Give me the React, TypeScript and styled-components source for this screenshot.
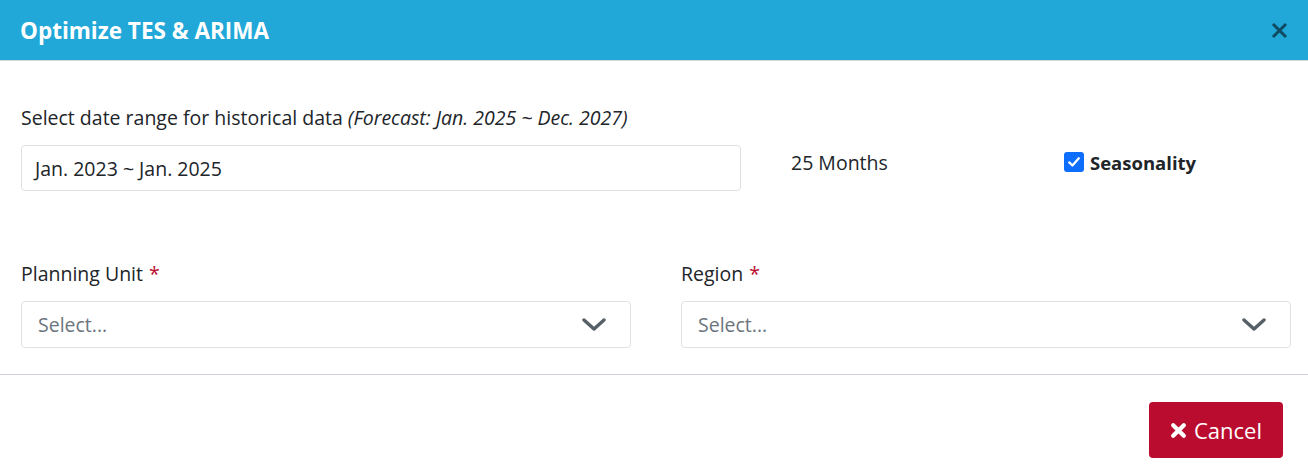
import styled, { createGlobalStyle } from "styled-components"

const GlobalStyle = createGlobalStyle`
    html, body {
        margin: 0;
        padding: 0;
        background: #fff;
    }
    body {
        font-family: 'Open Sans', 'Noto Sans', sans-serif;
        color: #212529;
    }
    * {
        box-sizing: border-box;
    }
`

const Modal = styled.div`
    width: 1308px;
    height: 469px;
    display: flex;
    flex-direction: column;
    background: #fff;
`

const Header = styled.div`
    height: 61px;
    flex-shrink: 0;
    background-color: #21a8d8;
    border-bottom: 1px solid #d5d9dd;
    display: flex;
    align-items: center;
    justify-content: space-between;
    padding: 1px 19px 0 20px;
`

const Titulo = styled.h5`
    margin: 0;
    font-size: 22.5px;
    font-weight: 700;
    color: #fff;
`

const BotaoFechar = styled.button`
    border: 0;
    background: transparent;
    padding: 0;
    display: flex;
    cursor: pointer;
    opacity: 0.55;
`

const Corpo = styled.div`
    padding: 43px 17px 0 21px;
    height: 313px;
    flex-shrink: 0;
`

const Rotulo = styled.label`
    display: block;
    font-size: 19.5px;
    line-height: 27px;
    margin-bottom: 14px;
`

const LinhaData = styled.div`
    display: flex;
    align-items: center;
`

const CampoData = styled.div`
    width: 720px;
    height: 46px;
    border: 1px solid #dee2e6;
    border-radius: 4px;
    display: flex;
    align-items: center;
    padding: 0 13px;
    font-size: 19.5px;
`

const Meses = styled.span`
    font-size: 19.5px;
    margin-left: 50px;
    width: 273px;
    position: relative;
    top: -6px;
`

const Sazonalidade = styled.label`
    display: flex;
    align-items: center;
    gap: 6px;
    font-size: 18.5px;
    font-weight: 700;
    position: relative;
    top: -6px;
`

const CaixaMarcada = styled.span`
    width: 20px;
    height: 20px;
    border-radius: 3px;
    background: #0d6efd;
    display: flex;
    align-items: center;
    justify-content: center;
`

const LinhaSelects = styled.div`
    display: grid;
    grid-template-columns: 610px 610px;
    column-gap: 50px;
    margin-top: 69px;
`

const Grupo = styled.div`
    display: flex;
    flex-direction: column;
`

const Asterisco = styled.span`
    color: #ba0c2f;
    margin-left: 6px;
`

const Select = styled.div`
    height: 47px;
    border: 1px solid #dee2e6;
    border-radius: 4px;
    display: flex;
    align-items: center;
    justify-content: space-between;
    padding: 0 24px 0 16px;
    font-size: 19.5px;
    color: #6c757d;
`

const Rodape = styled.div`
    border-top: 1px solid #ced4da;
    flex: 1;
    display: flex;
    justify-content: flex-end;
    align-items: flex-start;
    padding: 27px 25px 0 0;
`

const BotaoCancelar = styled.button`
    height: 56px;
    width: 134px;
    background-color: #ba0c2f;
    color: #fff;
    border: 0;
    border-radius: 4px;
    font-family: 'Open Sans', 'Noto Sans', sans-serif;
    font-size: 22px;
    display: flex;
    align-items: center;
    justify-content: center;
    gap: 7px;
    cursor: pointer;
`

const IconeFechar = () => (
    <svg width="19" height="19" viewBox="0 0 16 16">
        <path d="M2.5 2.5 L13.5 13.5 M13.5 2.5 L2.5 13.5" stroke="#000" strokeWidth="2.5" strokeLinecap="butt" />
    </svg>
)

const Check = () => (
    <svg width="14" height="14" viewBox="0 0 16 16">
        <path d="M2.5 8.5 L6.2 12 L13.5 3.8" fill="none" stroke="#fff" strokeWidth="2.6" strokeLinecap="round" strokeLinejoin="round" />
    </svg>
)

const Chevron = () => (
    <svg width="24" height="14" viewBox="0 0 24 14">
        <path d="M2 2 L12 11 L22 2" fill="none" stroke="#555f66" strokeWidth="3.4" strokeLinecap="round" strokeLinejoin="round" />
    </svg>
)

const Times = () => (
    <svg width="17" height="17" viewBox="0 0 16 16">
        <path d="M3 3 L13 13 M13 3 L3 13" stroke="#fff" strokeWidth="4" strokeLinecap="round" />
    </svg>
)

const App = () => {
    return (
        <Modal>
            <GlobalStyle />
            <Header>
                <Titulo>Optimize TES &amp; ARIMA</Titulo>
                <BotaoFechar><IconeFechar /></BotaoFechar>
            </Header>
            <Corpo>
                <Rotulo>Select date range for historical data <em>(Forecast: Jan. 2025 ~ Dec. 2027)</em></Rotulo>
                <LinhaData>
                    <CampoData>Jan. 2023 ~ Jan. 2025</CampoData>
                    <Meses>25 Months</Meses>
                    <Sazonalidade>
                        <CaixaMarcada><Check /></CaixaMarcada>
                        Seasonality
                    </Sazonalidade>
                </LinhaData>
                <LinhaSelects>
                    <Grupo>
                        <Rotulo>Planning Unit<Asterisco>*</Asterisco></Rotulo>
                        <Select>Select...<Chevron /></Select>
                    </Grupo>
                    <Grupo>
                        <Rotulo>Region<Asterisco>*</Asterisco></Rotulo>
                        <Select>Select...<Chevron /></Select>
                    </Grupo>
                </LinhaSelects>
            </Corpo>
            <Rodape>
                <BotaoCancelar><Times />Cancel</BotaoCancelar>
            </Rodape>
        </Modal>
    )
}

export default App
